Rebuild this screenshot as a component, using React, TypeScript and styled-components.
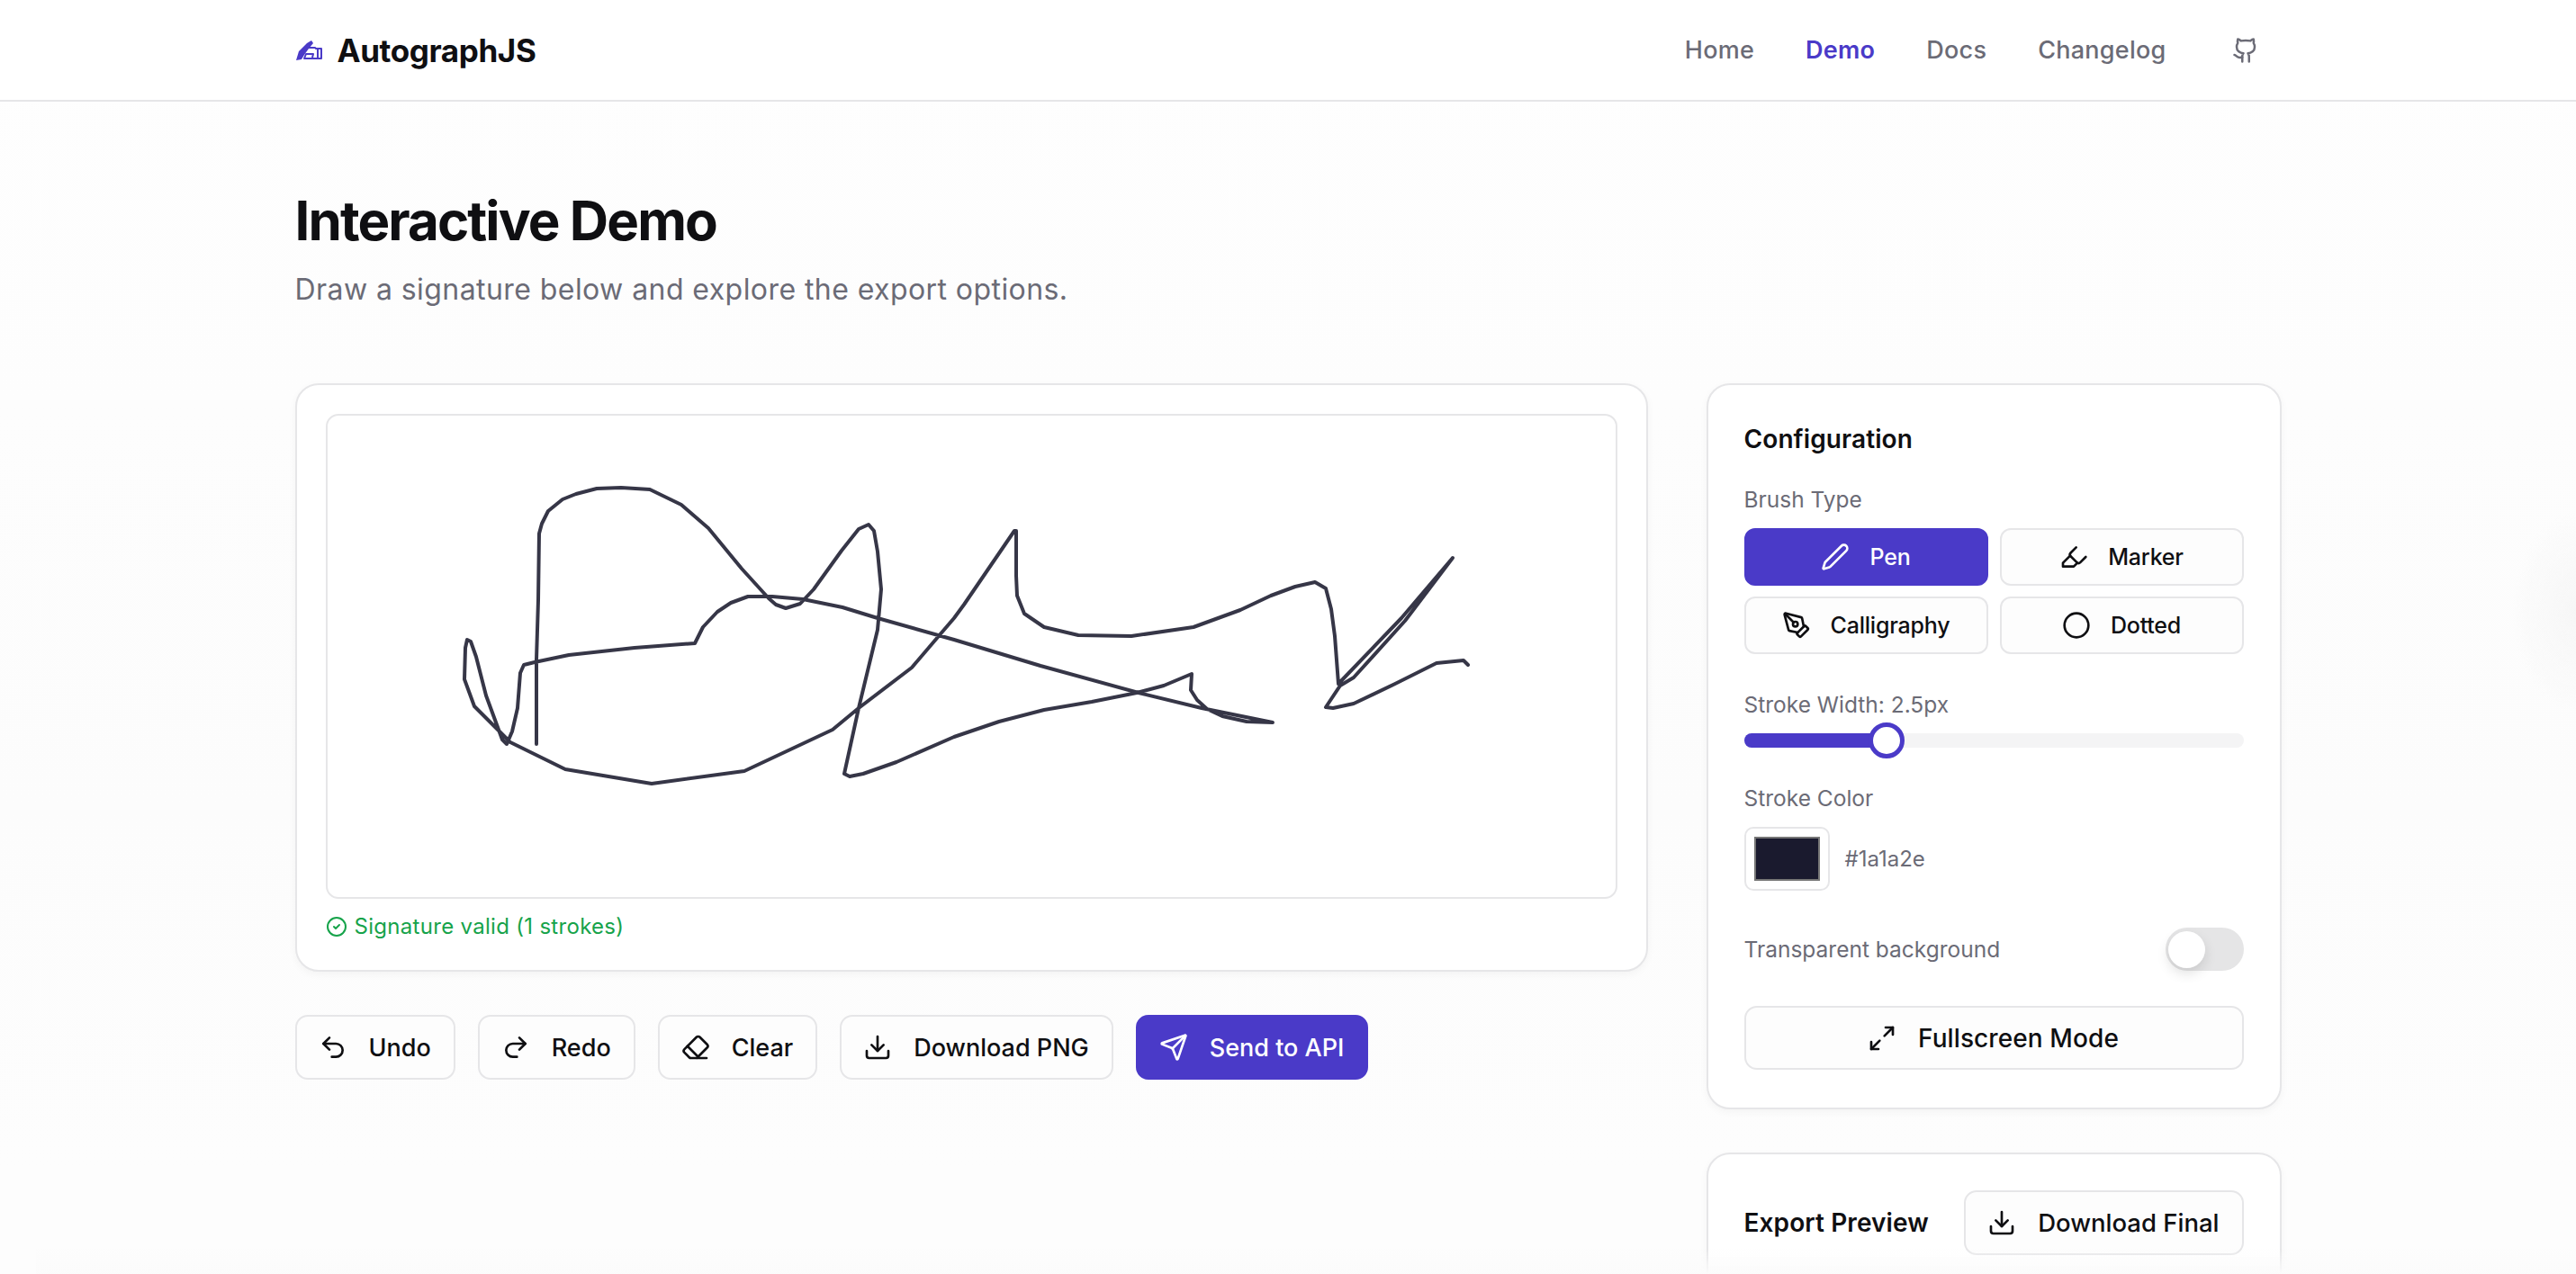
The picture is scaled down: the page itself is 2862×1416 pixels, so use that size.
import styled, { createGlobalStyle } from "styled-components";
import {
  Circle,
  CircleCheck,
  Download,
  Eraser,
  Github,
  Highlighter,
  Maximize2,
  Pen,
  PenTool,
  Redo2,
  Send,
  Undo2,
} from "lucide-react";

const ACCENT = "#4a3ac8";
const BORDER = "#e6e6e8";
const MUTED = "#6b6b76";
const INK = "#0f0f12";

const GlobalStyle = createGlobalStyle`
  html, body {
    margin: 0;
    height: 100%;
    overflow: hidden;
    background: linear-gradient(#fefefe 0, #fcfcfc 900px, #fdfdfd 1300px);
    color: ${INK};
    font-family: Inter, "Liberation Sans", sans-serif;
  }
  * {
    box-sizing: border-box;
  }
`;

const Header = styled.header`
  height: 113px;
  background: #fff;
  border-bottom: 2px solid ${BORDER};
  display: flex;
  justify-content: center;
`;

const HeaderInner = styled.div`
  width: 2207px;
  display: flex;
  align-items: center;
  justify-content: space-between;
`;

const Logo = styled.div`
  display: flex;
  align-items: center;
  gap: 17px;
  font-size: 35px;
  font-weight: 700;
  letter-spacing: -0.4px;
  svg {
    color: ${ACCENT};
  }
`;

const Nav = styled.nav`
  display: flex;
  align-items: center;
  padding-right: 25px;
`;

const NavLink = styled.a<{ $active?: boolean }>`
  font-size: 27px;
  letter-spacing: 0.25px;
  margin-right: 57px;
  color: ${(p) => (p.$active ? ACCENT : MUTED)};
  font-weight: ${(p) => (p.$active ? 600 : 500)};
`;

const GithubLink = styled.a`
  display: flex;
  color: ${MUTED};
  margin-left: 16px;
`;

const Main = styled.main`
  width: 2207px;
  margin: 0 auto;
  padding-top: 96px;
`;

const Title = styled.h1`
  margin: 0;
  font-size: 60px;
  line-height: 72px;
  font-weight: 700;
  letter-spacing: -1.9px;
`;

const Subtitle = styled.p`
  margin: 19px 0 0;
  font-size: 32px;
  line-height: 44px;
  color: ${MUTED};
  letter-spacing: 0.43px;
`;

const Columns = styled.div`
  margin-top: 82px;
  display: grid;
  grid-template-columns: 1503px 639px;
  column-gap: 65px;
  align-items: start;
`;

const Card = styled.section`
  background: #fff;
  border: 2px solid ${BORDER};
  border-radius: 26px;
  box-shadow: 0 3px 10px rgba(0, 0, 0, 0.04);
`;

const CanvasCard = styled(Card)`
  height: 654px;
  padding: 32px;
`;

const Canvas = styled.div`
  height: 539px;
  border: 2px solid ${BORDER};
  border-radius: 14px;
  background: #fff;
  svg {
    display: block;
  }
`;

const Status = styled.div`
  margin-top: 16px;
  display: flex;
  align-items: center;
  gap: 8px;
  font-size: 24px;
  color: #16a34a;
  letter-spacing: 0.3px;
`;

const Actions = styled.div`
  margin-top: 48px;
  display: flex;
  gap: 25px;
`;

const ActionButton = styled.button<{ $primary?: boolean }>`
  height: 72px;
  padding: 0 25px 0 24px;
  display: flex;
  align-items: center;
  gap: 24px;
  border-radius: 14px;
  border: 2px solid ${(p) => (p.$primary ? ACCENT : BORDER)};
  background: ${(p) => (p.$primary ? ACCENT : "#fdfdfd")};
  color: ${(p) => (p.$primary ? "#fff" : INK)};
  font: 500 27px Inter, "Liberation Sans", sans-serif;
  letter-spacing: 0;
`;

const Side = styled.aside`
  display: flex;
  flex-direction: column;
  gap: 48px;
`;

const ConfigCard = styled(Card)`
  height: 807px;
  padding: 40px 40px 0;
`;

const PanelTitle = styled.h2`
  margin: 0;
  font-size: 28px;
  line-height: 40px;
  font-weight: 600;
  letter-spacing: 0.1px;
`;

const Label = styled.div<{ $gap?: number }>`
  margin-top: ${(p) => p.$gap ?? 0}px;
  font-size: 24.5px;
  line-height: 34px;
  color: ${MUTED};
`;

const BrushGrid = styled.div`
  margin-top: 15px;
  display: grid;
  grid-template-columns: 1fr 1fr;
  gap: 12px 13px;
`;

const BrushButton = styled.button<{ $active?: boolean }>`
  height: 64px;
  display: flex;
  align-items: center;
  justify-content: center;
  gap: 22px;
  border-radius: 12px;
  border: 2px solid ${(p) => (p.$active ? ACCENT : BORDER)};
  background: ${(p) => (p.$active ? ACCENT : "#fdfdfd")};
  color: ${(p) => (p.$active ? "#fff" : INK)};
  font: 500 25px Inter, "Liberation Sans", sans-serif;
  letter-spacing: -0.2px;
`;

const Slider = styled.div`
  position: relative;
  margin-top: 15px;
  height: 16px;
  border-radius: 8px;
  background: #f4f4f5;
`;

const SliderFill = styled.div`
  height: 100%;
  border-radius: 8px;
  background: ${ACCENT};
`;

const SliderThumb = styled.div`
  position: absolute;
  top: -12px;
  width: 40px;
  height: 40px;
  margin-left: -20px;
  border-radius: 50%;
  background: #fff;
  border: 5px solid ${ACCENT};
`;

const ColorRow = styled.div`
  margin-top: 15px;
  display: flex;
  align-items: center;
  gap: 17px;
`;

const Swatch = styled.div`
  width: 95px;
  height: 71px;
  padding: 9px;
  border: 2px solid ${BORDER};
  border-radius: 10px;
  background: #fff;
`;

const SwatchFill = styled.div`
  height: 100%;
  background: #1a1a2e;
  border: 2px solid #767676;
`;

const ColorValue = styled.span`
  font-size: 24px;
  color: ${MUTED};
`;

const ToggleRow = styled.div`
  margin-top: 41px;
  display: flex;
  align-items: center;
  justify-content: space-between;
  font-size: 24.5px;
  color: ${MUTED};
`;

const Toggle = styled.div`
  position: relative;
  width: 87px;
  height: 48px;
  border-radius: 24px;
  background: #e5e5e6;
`;

const ToggleThumb = styled.div`
  position: absolute;
  top: 4px;
  left: 3px;
  width: 41px;
  height: 41px;
  border-radius: 50%;
  background: #fff;
  box-shadow: 0 6px 14px rgba(0, 0, 0, 0.12);
`;

const LargeButton = styled(ActionButton)`
  font-size: 27.5px;
`;

const WideButton = styled(LargeButton)`
  margin-top: 39px;
  width: 100%;
  height: 71px;
  justify-content: center;
  font-size: 28px;
  letter-spacing: 0.1px;
`;

const ExportCard = styled(Card)`
  height: 300px;
  padding: 40px;
`;

const ExportHead = styled.div`
  display: flex;
  align-items: center;
  justify-content: space-between;
`;

const Glow = styled.div`
  position: fixed;
  right: -70px;
  top: 570px;
  width: 140px;
  height: 220px;
  border-radius: 50%;
  background: radial-gradient(closest-side, #f6f6f6, rgba(250, 250, 250, 0));
  pointer-events: none;
`;

const BottomShade = styled.div`
  position: fixed;
  left: 40px;
  right: 0;
  bottom: 0;
  height: 28px;
  background: linear-gradient(rgba(251, 251, 251, 0), #fbfbfb);
  pointer-events: none;
`;

const signature: [number, number][] = [
  [596, 827], [596, 733], [598, 667], [599, 593], [602, 582], [609, 568], [625, 555], [640, 549],
  [663, 543], [690, 542], [722, 544], [757, 561], [787, 587], [824, 632], [854, 665], [862, 672],
  [873, 676], [889, 671], [904, 655], [935, 612], [954, 588], [965, 583], [971, 590], [975, 613],
  [979, 655], [975, 700], [954, 787], [938, 860], [944, 863], [959, 860], [996, 847], [1060, 819],
  [1110, 802], [1160, 789], [1213, 780], [1263, 770], [1293, 762], [1324, 749], [1323, 767],
  [1330, 778], [1341, 788], [1358, 796], [1385, 802], [1414, 803], [1335, 787], [1265, 770],
  [1156, 740], [1060, 711], [975, 687], [936, 675], [892, 666], [858, 663], [831, 663], [812, 670],
  [797, 680], [781, 697], [772, 715], [705, 720], [632, 728], [594, 736], [582, 739], [578, 748],
  [575, 787], [569, 813], [563, 827], [558, 822], [540, 773], [529, 730], [523, 713], [519, 711],
  [517, 720], [516, 755], [527, 785], [552, 810], [567, 825], [628, 855], [724, 871], [827, 857],
  [925, 811], [954, 787], [1013, 742], [1042, 708], [1060, 687], [1071, 672], [1127, 590],
  [1129, 590], [1129, 640], [1130, 662], [1138, 682], [1160, 697], [1198, 706], [1257, 707],
  [1326, 697], [1378, 678], [1412, 662], [1439, 652], [1461, 647], [1473, 654], [1479, 677],
  [1483, 707], [1487, 760], [1557, 687], [1614, 620], [1561, 690], [1504, 753], [1489, 762],
  [1473, 786], [1481, 787], [1504, 782], [1550, 760], [1596, 737], [1626, 734], [1631, 739],
];

const LogoMark = () => (
  <svg width="30" height="24" viewBox="0 0 30 24" fill="none">
    <path d="M1 23 L4 13 L13 4 L18 1 L20 4 L15 10 L10 17 L7 22 Z" fill="currentColor" />
    <path
      d="M15 9 H22 L23 10 H29 V21 H20 L10 21 L12 16 H20 L19 20"
      stroke="currentColor"
      strokeWidth="2"
      strokeLinejoin="round"
    />
    <path d="M25 10 V21" stroke="currentColor" strokeWidth="2" />
  </svg>
);

export default function App() {
  return (
    <>
      <GlobalStyle />
      <Header>
        <HeaderInner>
          <Logo>
            <LogoMark />
            AutographJS
          </Logo>
          <Nav>
            <NavLink>Home</NavLink>
            <NavLink $active>Demo</NavLink>
            <NavLink>Docs</NavLink>
            <NavLink>Changelog</NavLink>
            <GithubLink>
              <Github size={30} strokeWidth={2} />
            </GithubLink>
          </Nav>
        </HeaderInner>
      </Header>
      <Main>
        <Title>Interactive Demo</Title>
        <Subtitle>Draw a signature below and explore the export options.</Subtitle>
        <Columns>
          <div>
            <CanvasCard>
              <Canvas>
                <svg width="1431" height="535" viewBox="364 462 1431 535">
                  <polyline
                    points={signature.map((p) => p.join(",")).join(" ")}
                    fill="none"
                    stroke="#1a1a2e"
                    strokeWidth="4"
                    strokeLinejoin="round"
                    strokeLinecap="round"
                    opacity="0.88"
                  />
                </svg>
              </Canvas>
              <Status>
                <CircleCheck size={24} strokeWidth={2} />
                Signature valid (1 strokes)
              </Status>
            </CanvasCard>
            <Actions>
              <ActionButton>
                <Undo2 size={32} strokeWidth={2} />
                Undo
              </ActionButton>
              <ActionButton>
                <Redo2 size={32} strokeWidth={2} />
                Redo
              </ActionButton>
              <ActionButton>
                <Eraser size={32} strokeWidth={2} />
                Clear
              </ActionButton>
              <ActionButton>
                <Download size={32} strokeWidth={2} />
                Download PNG
              </ActionButton>
              <ActionButton $primary>
                <Send size={32} strokeWidth={2} />
                Send to API
              </ActionButton>
            </Actions>
          </div>
          <Side>
            <ConfigCard>
              <PanelTitle>Configuration</PanelTitle>
              <Label $gap={30}>Brush Type</Label>
              <BrushGrid>
                <BrushButton $active>
                  <Pen size={32} strokeWidth={2} />
                  Pen
                </BrushButton>
                <BrushButton>
                  <Highlighter size={32} strokeWidth={2} />
                  Marker
                </BrushButton>
                <BrushButton>
                  <PenTool size={32} strokeWidth={2} />
                  Calligraphy
                </BrushButton>
                <BrushButton>
                  <Circle size={32} strokeWidth={2} />
                  Dotted
                </BrushButton>
              </BrushGrid>
              <Label $gap={39}>Stroke Width: 2.5px</Label>
              <Slider>
                <SliderFill style={{ width: "158px" }} />
                <SliderThumb style={{ left: "158px" }} />
              </Slider>
              <Label $gap={39}>Stroke Color</Label>
              <ColorRow>
                <Swatch>
                  <SwatchFill />
                </Swatch>
                <ColorValue>#1a1a2e</ColorValue>
              </ColorRow>
              <ToggleRow>
                Transparent background
                <Toggle>
                  <ToggleThumb />
                </Toggle>
              </ToggleRow>
              <WideButton>
                <Maximize2 size={32} strokeWidth={2} />
                Fullscreen Mode
              </WideButton>
            </ConfigCard>
            <ExportCard>
              <ExportHead>
                <PanelTitle>Export Preview</PanelTitle>
                <LargeButton>
                  <Download size={32} strokeWidth={2} />
                  Download Final
                </LargeButton>
              </ExportHead>
            </ExportCard>
          </Side>
        </Columns>
      </Main>
      <Glow />
      <BottomShade />
    </>
  );
}
